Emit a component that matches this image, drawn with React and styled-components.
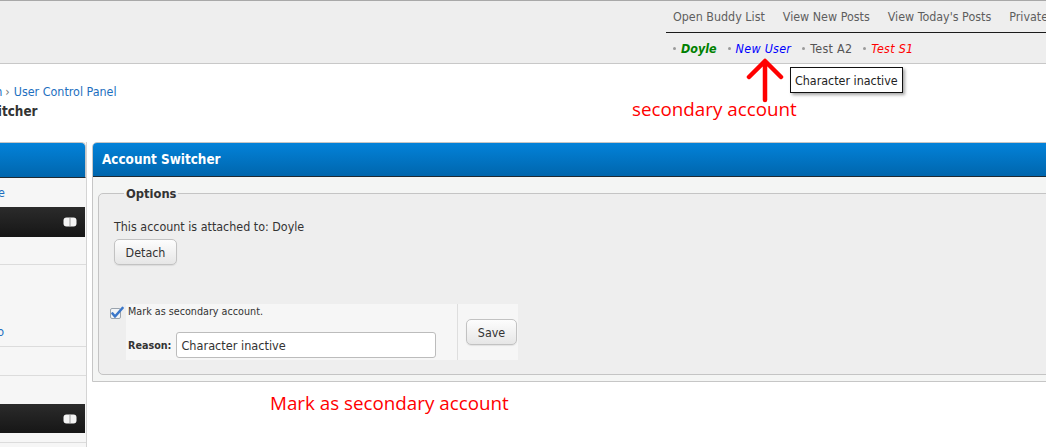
import React from 'react';
import styled, { createGlobalStyle } from 'styled-components';

const GlobalStyle = createGlobalStyle`
  html, body {
    margin: 0;
    padding: 0;
    background: #fff;
    overflow: hidden;
  }
  body {
    font-family: "DejaVu Sans Condensed", "DejaVu Sans", sans-serif;
    font-size: 12.4px;
    color: #333;
  }
`;

const Page = styled.div`
  position: relative;
  width: 1046px;
  height: 447px;
  overflow: hidden;
`;

const TopBar = styled.div`
  height: 62px;
  background: #eeeeee;
  border-top: 1px solid #a8a8a8;
  border-bottom: 1px solid #c8c8c8;
  display: flex;
`;

const NavArea = styled.div`
  margin-left: 666px;
  flex: 1;
  display: flex;
  flex-direction: column;
`;

const NavLinks = styled.div`
  height: 31px;
  border-bottom: 1px solid #1a1a1a;
  display: flex;
  align-items: center;
  gap: 18px;
  padding-left: 7px;
  white-space: nowrap;
`;

const NavLink = styled.span`
  color: #5e5e5e;
`;

const AccountRow = styled.div`
  flex: 1;
  display: flex;
  align-items: center;
  padding-left: 7px;
  gap: 11px;
  white-space: nowrap;
`;

const Account = styled.span`
  display: flex;
  align-items: center;
  color: ${p => p.$color};
  font-style: ${p => (p.$italic ? 'italic' : 'normal')};
  font-weight: ${p => (p.$bold ? 'bold' : 'normal')};
  letter-spacing: ${p => (p.$bold ? 0 : 0.3)}px;
  &::before {
    content: '';
    width: 3px;
    height: 3px;
    border-radius: 50%;
    background: #9a9a9a;
    margin-right: 5px;
  }
`;

const Tooltip = styled.div`
  position: absolute;
  left: 790px;
  top: 67px;
  height: 24px;
  padding: 0 4px;
  display: flex;
  align-items: center;
  background: #fff;
  border: 1px solid #111;
  box-shadow: 2px 2px 3px rgba(0, 0, 0, 0.35);
  color: #222;
  white-space: nowrap;
`;

const Note = styled.div`
  position: absolute;
  left: ${p => p.$x}px;
  top: ${p => p.$y}px;
  color: #ff0000;
  font-family: "Open Sans", sans-serif;
  font-size: 18.8px;
  font-weight: 500;
  white-space: nowrap;
`;

const Arrow = styled.svg`
  position: absolute;
  left: 744px;
  top: 57px;
`;

const Breadcrumb = styled.div`
  margin-top: 20px;
  margin-left: -33px;
  line-height: 16px;
  color: #1d6fc0;
  white-space: nowrap;
`;

const Sep = styled.span`
  color: #777;
  margin: 0 4px 0 3px;
`;

const Title = styled.div`
  margin-top: 3px;
  margin-left: -81px;
  line-height: 18px;
  font-size: 13.4px;
  font-weight: bold;
  color: #333;
  white-space: nowrap;
`;

const Columns = styled.div`
  margin-top: 21px;
  margin-left: -120px;
  display: flex;
  gap: 5px;
  align-items: flex-start;
`;

const Sidebar = styled.div`
  flex-shrink: 0;
  width: 206px;
  height: 320px;
  border-right: 1px solid #d4d4d4;
  background: #f6f6f6;
  display: flex;
  flex-direction: column;
`;

const BlueHeader = styled.div`
  height: ${p => p.$h}px;
  background: linear-gradient(#0382d9, #0066ad);
  border: ${p => (p.$framed ? '1px solid #c6c6c6' : 'none')};
  border-bottom: 1px solid #1e2a33;
  border-radius: ${p => (p.$framed ? '0 5px 0 0' : '4px 4px 0 0')};
  display: flex;
  align-items: center;
  padding-left: 9px;
  color: #fff;
  font-size: 13.4px;
  font-weight: bold;
`;

const SideRow = styled.div`
  height: ${p => p.$h}px;
  border-bottom: ${p => (p.$line ? '1px solid #dcdcdc' : 'none')};
  display: flex;
  align-items: ${p => (p.$bottom ? 'flex-end' : 'center')};
  padding-left: ${p => p.$pad || 0}px;
  padding-bottom: ${p => (p.$bottom ? 7 : 0)}px;
  box-sizing: border-box;
`;

const SideLink = styled.span`
  color: #1d6fc0;
  white-space: nowrap;
`;

const DarkBar = styled.div`
  height: ${p => p.$h}px;
  margin-right: 1px;
  background: linear-gradient(#2b2b2b, #161616);
  display: flex;
  align-items: center;
  justify-content: flex-end;
  padding-right: 8px;
`;

const Panel = styled.div`
  flex: 1;
  min-width: 1000px;
  border: 1px solid #c6c6c6;
  border-radius: 5px 5px 0 0;
  background: #f4f5f4;
`;

const PanelBody = styled.div`
  padding: 9px 0 6px 5px;
`;

const Fieldset = styled.fieldset`
  margin: 0;
  padding: 10px 0 14px 15px;
  border: 1px solid #c4c4c4;
  border-radius: 5px;
  background: #eeeeee;
  min-height: 0;
`;

const Legend = styled.legend`
  padding: 0 2px;
  margin-left: 10px;
  font-size: 12.8px;
  font-weight: bold;
  color: #333;
`;

const Line = styled.div`
  line-height: 16px;
  margin-top: 8px;
`;

const Button = styled.button`
  font-family: inherit;
  font-size: 12.4px;
  color: #333;
  height: 26px;
  width: ${p => p.$w}px;
  padding: 0;
  border: 1px solid #c2c2c2;
  border-radius: 5px;
  background: linear-gradient(#fdfdfd, #e6e6e6);
  box-shadow: 0 1px 1px rgba(0, 0, 0, 0.08);
`;

const DetachRow = styled.div`
  margin-top: 4px;
`;

const OptionRow = styled.div`
  margin-top: 39px;
  margin-left: -4px;
  display: flex;
  align-items: stretch;
  height: 56px;
`;

const CheckCol = styled.div`
  width: 16px;
  padding-top: 2px;
`;

const OptionCell = styled.div`
  width: ${p => p.$w}px;
  background: #f6f6f6;
  border-left: ${p => (p.$sep ? '1px solid #dedede' : 'none')};
  display: flex;
  flex-direction: column;
  justify-content: ${p => (p.$center ? 'center' : 'flex-start')};
  padding-left: ${p => p.$pad}px;
  box-sizing: border-box;
`;

const CheckLabel = styled.div`
  font-size: 10.7px;
  line-height: 16px;
  color: #333;
`;

const ReasonRow = styled.div`
  margin-top: 12px;
  display: flex;
  align-items: center;
  gap: 5px;
`;

const ReasonLabel = styled.span`
  font-size: 10.7px;
  font-weight: bold;
  color: #333;
`;

const TextInput = styled.div`
  width: 260px;
  height: 26px;
  box-sizing: border-box;
  border: 1px solid #bcbcbc;
  border-radius: 3px;
  background: #fff;
  display: flex;
  align-items: center;
  padding-left: 4px;
  font-size: 12.6px;
  color: #333;
`;

const Toggle = () => (
  <svg width="14" height="10" viewBox="0 0 14 10">
    <rect x="0.5" y="0.5" width="13" height="9" rx="3" fill="#f4f4f4" />
    <line x1="7" y1="1" x2="7" y2="9" stroke="#9a9a9a" strokeWidth="1" />
  </svg>
);

const CheckIcon = () => (
  <svg width="14" height="13" viewBox="0 0 14 13">
    <rect x="0.5" y="2.5" width="10" height="10" rx="1.5" fill="#f2f4f6" stroke="#9aa3ad" />
    <path d="M2.5 7.5 L5 10.5 L12.5 2" fill="none" stroke="#3b77c9" strokeWidth="2.6" strokeLinecap="round" strokeLinejoin="round" />
  </svg>
);

const App = () => {
  return (
    <Page>
      <GlobalStyle />
      <TopBar>
        <NavArea>
          <NavLinks>
            <NavLink>Open Buddy List</NavLink>
            <NavLink>View New Posts</NavLink>
            <NavLink>View Today's Posts</NavLink>
            <NavLink>Private Messages</NavLink>
          </NavLinks>
          <AccountRow>
            <Account $color="#008000" $italic $bold>Doyle</Account>
            <Account $color="#0000ff" $italic>New User</Account>
            <Account $color="#555555">Test A2</Account>
            <Account $color="#ff0000" $italic>Test S1</Account>
          </AccountRow>
        </NavArea>
      </TopBar>

      <Breadcrumb>
        Forum<Sep>›</Sep>User Control Panel
      </Breadcrumb>
      <Title>Account Switcher</Title>

      <Columns>
        <Sidebar>
          <BlueHeader $h={34} $framed>My Settings</BlueHeader>
          <SideRow $h={29} $pad={38}>
            <SideLink>Edit Your Profile</SideLink>
          </SideRow>
          <DarkBar $h={30}>
            <Toggle />
          </DarkBar>
          <SideRow $h={28} $line />
          <SideRow $h={82} $line $bottom $pad={29}>
            <SideLink>Edit Profile Photo</SideLink>
          </SideRow>
          <SideRow $h={29} $line />
          <SideRow $h={28} />
          <DarkBar $h={29}>
            <Toggle />
          </DarkBar>
          <SideRow $h={10} $line />
        </Sidebar>

        <Panel>
          <BlueHeader $h={33}>Account Switcher</BlueHeader>
          <PanelBody>
            <Fieldset>
              <Legend>Options</Legend>
              <Line>This account is attached to: Doyle</Line>
              <DetachRow>
                <Button $w={63}>Detach</Button>
              </DetachRow>
              <OptionRow>
                <CheckCol>
                  <CheckIcon />
                </CheckCol>
                <OptionCell $w={331} $pad={2}>
                  <CheckLabel>Mark as secondary account.</CheckLabel>
                  <ReasonRow>
                    <ReasonLabel>Reason:</ReasonLabel>
                    <TextInput>Character inactive</TextInput>
                  </ReasonRow>
                </OptionCell>
                <OptionCell $w={61} $pad={8} $sep $center>
                  <Button $w={51}>Save</Button>
                </OptionCell>
              </OptionRow>
            </Fieldset>
          </PanelBody>
        </Panel>
      </Columns>

      <Tooltip>Character inactive</Tooltip>
      <Arrow width="42" height="46" viewBox="0 0 42 46">
        <path d="M21 5 V43 M5 20 L21 4 L37 20" fill="none" stroke="#ff0000" strokeWidth="4.5" strokeLinecap="round" strokeLinejoin="round" />
      </Arrow>
      <Note $x={632} $y={96}>secondary account</Note>
      <Note $x={270} $y={390}>Mark as secondary account</Note>
    </Page>
  );
};

export default App;
